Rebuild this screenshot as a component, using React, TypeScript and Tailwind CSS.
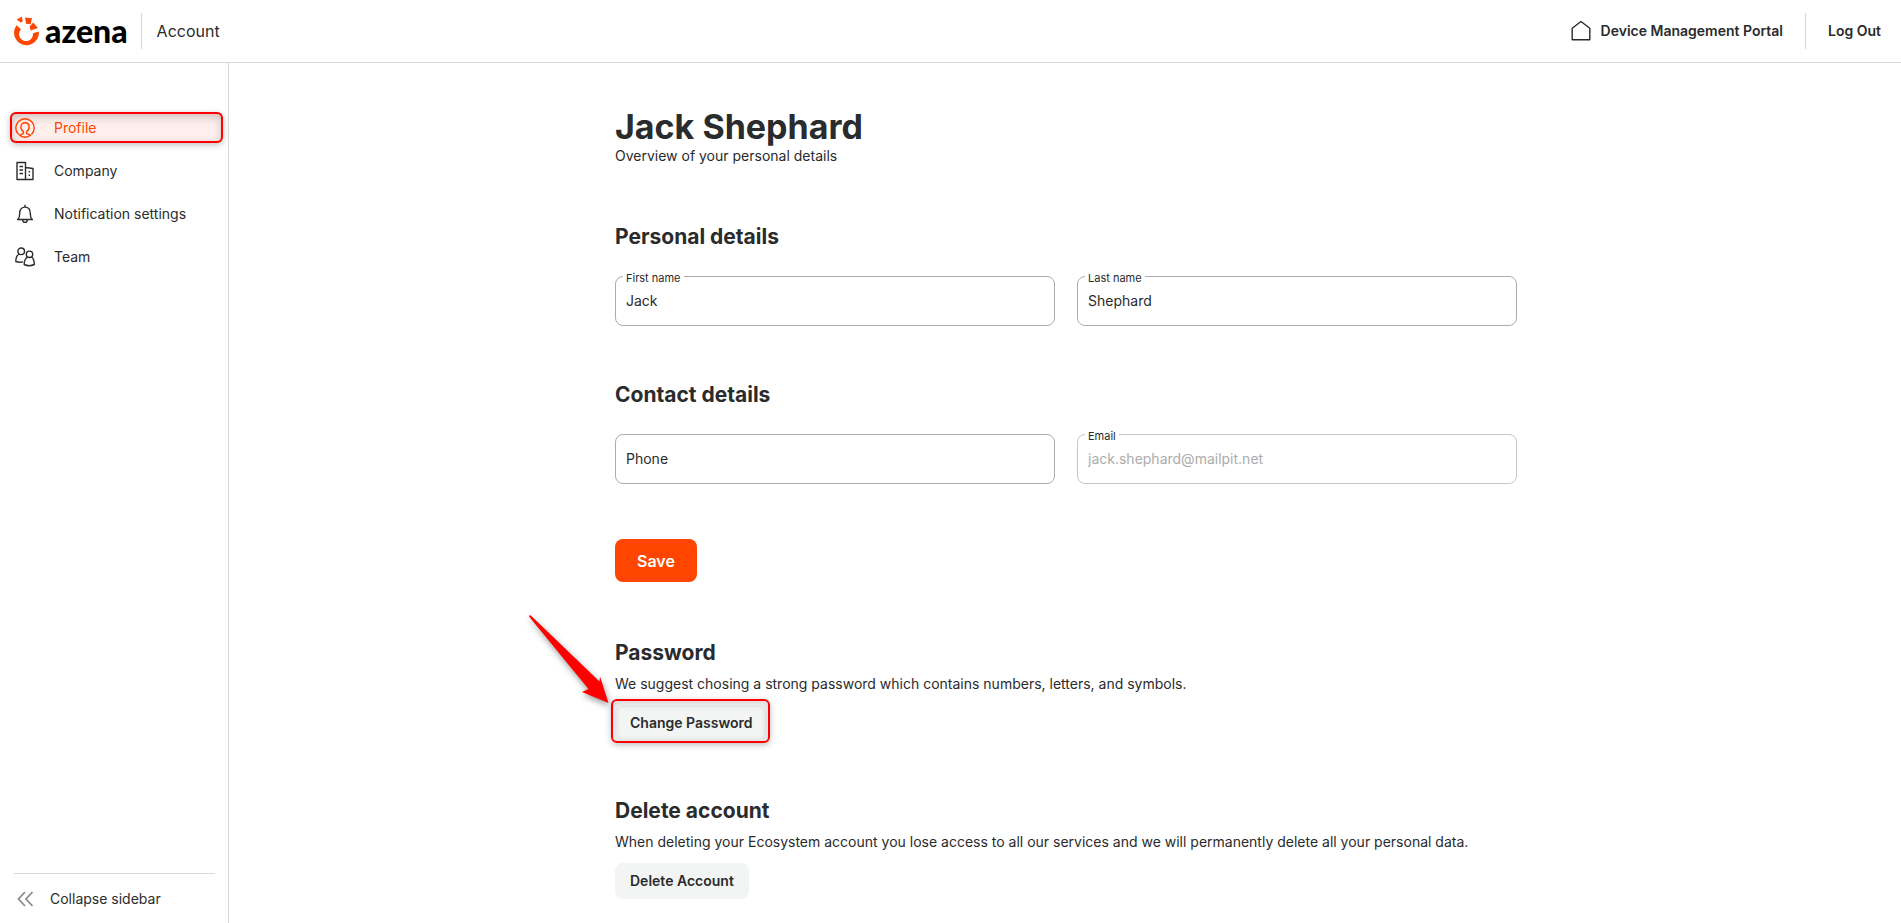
import React from "react";

const text = "text-[14px] leading-5";

function Logo() {
  return (
    <a href="#" aria-label="azena" className="flex items-center gap-1.5">
      <svg width="25" height="30" viewBox="0 0 25 30" fill="#ff4500" aria-hidden="true">
        <path d="M2.6 9.3 7 13.2A7 7 0 1 0 19 17.2L24.8 15.6A12.4 12.4 0 1 1 2.6 9.3Z" />
        <path d="M2.600 3.600 7.800.800 8.800 5.600 6.800 6.400Z" />
        <path d="M11 1.600 18 2.300 16.600 8.300 12 7.800Z" />
        <path d="M19.200 6.600 24 12 16.600 14.600 15.600 10.600Z" />
      </svg>
      <span className="font-['Lato',sans-serif] text-[32px] leading-8 font-black text-black">azena</span>
    </a>
  );
}

const icons = {
  profile: (
    <>
      <path d="M3.600 16.600a9.200 9.200 0 1 1 12.800 0" />
      <path d="M8.400 13.600C6.600 12.600 5.900 11 5.900 9c0-2.600 1.600-4.300 4.100-4.300s4.100 1.700 4.100 4.300c0 2-.7 3.600-2.500 4.600v2l4 1.500c-1.400 1.500-3.200 2.200-5.600 2.200s-4.200-.7-5.600-2.200l4-1.500Z" />
    </>
  ),
  company: (
    <>
      <path d="M2 1.500h8.500v17H2zM10.500 6.500 18 7.500v11h-7.500" />
      <path d="M4.500 5.500H8M4.500 9H8M4.500 12.500H8M14.300 10v1.500M14.300 13.500V15" />
    </>
  ),
  bell: (
    <>
      <path d="M10 .8v2M2 15.500h16M3 15.500c1.500-1.500 1.700-3 1.700-6 0-4 2.200-6.400 5.300-6.400s5.300 2.400 5.300 6.400c0 3 .2 4.500 1.700 6M7.700 16c0 3.200 4.600 3.200 4.600 0" />
    </>
  ),
  team: (
    <>
      <circle cx="6.200" cy="4.300" r="3.300" />
      <circle cx="14.500" cy="7.300" r="3.200" />
      <path d="M4.200 7C1.600 8.500.8 11.500.8 14.500c2.200.8 4.800.9 7.200.4M12.500 10c-2.400 1.500-3.300 4-3.300 7.500 3.200 1.500 6.900 1.500 10.100 0 0-3.500-.7-6-2.800-7.500" />
    </>
  ),
};

function NavItem({ icon, label, active }: { icon: keyof typeof icons; label: string; active?: boolean }) {
  return (
    <a
      href="#"
      aria-current={active ? "page" : undefined}
      className={`flex h-[31px] items-center gap-[19px] rounded-md pl-[5px] ${text} ${
        active
          ? "bg-[#ffefec] text-[#ff4500] shadow-[inset_0_0_0_2px_#f00,inset_0_3px_8px_2px_rgba(0,0,0,0.2),0_2px_6px_rgba(0,0,0,0.25)]"
          : "text-[#2a2b2c]"
      }`}
    >
      <svg width="20" height="20" viewBox="0 0 20 20" fill="none" stroke="currentColor" strokeWidth="1.400" strokeLinejoin="round" aria-hidden="true">
        {icons[icon]}
      </svg>
      {label}
    </a>
  );
}

const input =
  "block h-[50px] w-full rounded-lg border border-[#acacac] px-2.5 pb-0.5 text-[14px] leading-5 text-[#2a2b2c] placeholder:text-[#2a2b2c] disabled:border-[#c6c6c6] disabled:text-[#acacac]";

function Field({ id, label, value, disabled }: { id: string; label: string; value: string; disabled?: boolean }) {
  return (
    <div className="relative">
      <label htmlFor={id} className="absolute -top-1.5 left-2 bg-white px-[3px] text-[11px] leading-4 text-[#2a2b2c]">
        {label}
      </label>
      <input id={id} defaultValue={value} disabled={disabled} className={input} />
    </div>
  );
}

const heading = "text-[21px] leading-7 font-bold";
const grayButton = "h-9 rounded-lg bg-[#f3f5f5] px-[15px] text-[14px] leading-5 font-semibold";

export default function App() {
  return (
    <div className="flex min-h-screen flex-col bg-white font-['Inter','Liberation_Sans',sans-serif] text-[#2a2b2c]">
      <header className="flex h-[63px] items-center border-b border-[#d8d8d8] pr-5 pl-3.5">
        <Logo />
        <div className="ml-[13px] h-9 w-px bg-[#d8d8d8]" />
        <span className="ml-[15px] text-[16px] leading-6">Account</span>
        <a href="#" className={`ml-auto flex items-center gap-2.5 font-semibold ${text}`}>
          <svg width="20" height="22" viewBox="0 0 20 22" fill="none" stroke="currentColor" strokeWidth="1.400" strokeLinejoin="round" aria-hidden="true">
            <path d="M1.200 8.200 10 1.500l8.800 6.700v11.600H1.200Z" />
          </svg>
          Device Management Portal
        </a>
        <div className="mx-[22px] h-9 w-px bg-[#d8d8d8]" />
        <a href="#" className={`font-semibold ${text}`}>Log Out</a>
      </header>

      <div className="flex grow">
        <aside className="flex w-[229px] shrink-0 flex-col border-r border-[#d8d8d8]">
          <nav className="mt-[49px] mr-[5px] ml-2.5 flex flex-col gap-3">
            <NavItem icon="profile" label="Profile" active />
            <NavItem icon="company" label="Company" />
            <NavItem icon="bell" label="Notification settings" />
            <NavItem icon="team" label="Team" />
          </nav>
          <button className={`mt-auto mr-[13px] ml-3.5 flex h-[50px] items-center gap-[15px] border-t border-[#d8d8d8] pl-[3px] ${text}`}>
            <svg width="18" height="16" viewBox="0 0 18 16" fill="none" stroke="#8c8c8c" strokeWidth="1.800" aria-hidden="true">
              <path d="M8 1 1.500 8 8 15M15.500 1 9 8l6.500 7" />
            </svg>
            Collapse sidebar
          </button>
        </aside>

        <main className="grow pl-0.5">
          <div className="mx-auto max-w-[902px] pt-[45px]">
            <h1 className="text-[34px] leading-[38px] font-bold">Jack Shephard</h1>
            <p className={text}>Overview of your personal details</p>

            <h2 className={`mt-[57px] ${heading}`}>Personal details</h2>
            <div className="mt-[25px] grid grid-cols-2 gap-[22px]">
              <Field id="first" label="First name" value="Jack" />
              <Field id="last" label="Last name" value="Shephard" />
            </div>

            <h2 className={`mt-[55px] ${heading}`}>Contact details</h2>
            <div className="mt-[25px] grid grid-cols-2 gap-[22px]">
              <input aria-label="Phone" placeholder="Phone" className={input} />
              <Field id="email" label="Email" value="jack.shephard@mailpit.net" disabled />
            </div>

            <button className="mt-[55px] block h-[43px] rounded-lg bg-[#ff4500] px-[22px] text-[16px] leading-6 font-semibold text-white">
              Save
            </button>

            <h2 className={`mt-[57px] ${heading}`}>Password</h2>
            <p className={`mt-[7px] ${text}`}>We suggest chosing a strong password which contains numbers, letters, and symbols.</p>
            <div className="relative mt-[11px] w-fit">
              <button className={grayButton}>Change Password</button>
              <div className="pointer-events-none absolute -top-1.5 -right-[3px] -bottom-0.5 -left-1 rounded-md border-2 border-[#f00] shadow-[inset_0_2px_6px_2px_rgba(0,0,0,0.15),0_2px_6px_rgba(0,0,0,0.25)]" />
              <svg className="pointer-events-none absolute -top-[92px] -left-[90px] drop-shadow-[1px_3px_3px_rgba(0,0,0,0.4)]" width="90" height="92" viewBox="0 0 90 92" fill="#f00" aria-hidden="true">
                <path d="M4.200 3.800Q4 2 5.800 2.400L74.500 68.500 75 63.500 83.500 90 57 79 63.500 76Z" />
              </svg>
            </div>

            <h2 className={`mt-14 ${heading}`}>Delete account</h2>
            <p className={`mt-[7px] ${text}`}>
              When deleting your Ecosystem account you lose access to all our services and we will permanently delete all your personal data.
            </p>
            <button className={`mt-[11px] ${grayButton}`}>Delete Account</button>
          </div>
        </main>
      </div>
    </div>
  );
}
